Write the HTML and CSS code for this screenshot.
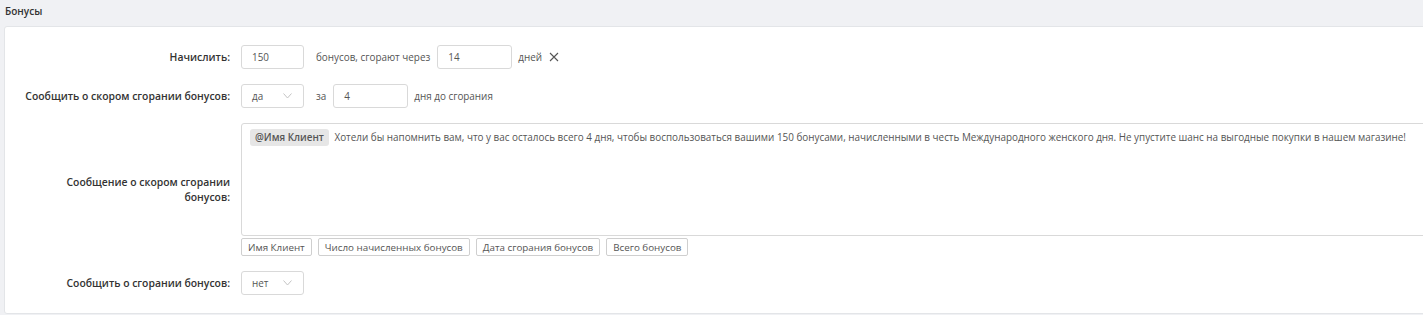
FILE: index.html
```html
<!DOCTYPE html>
<html lang="ru">
<head>
    <meta charset="UTF-8">
    <title>Бонусы</title>
    <link rel="stylesheet" href="styles.css">
</head>
<body>

<div class="section-title">Бонусы</div>

<div class="card">
    <!-- Начисление -->
    <div class="row">
        <label class="label">Начислить:</label>
        <div class="field">
            <div class="input short">150</div>
            <span class="text">бонусов, сгорают через</span>
            <div class="input">14</div>
            <span class="text">дней</span>
            <svg class="close" width="10" height="10" viewBox="0 0 10 10">
                <path d="M1 1L9 9M9 1L1 9" stroke="#555" stroke-width="1.1" fill="none"/>
            </svg>
        </div>
    </div>

    <!-- Напоминание -->
    <div class="row">
        <label class="label">Сообщить о скором сгорании бонусов:</label>
        <div class="field">
            <div class="select">
                <span>да</span>
                <svg width="9" height="6" viewBox="0 0 9 6">
                    <path d="M0.5 0.5L4.5 5L8.5 0.5" stroke="#c4c4c4" fill="none"/>
                </svg>
            </div>
            <span class="text">за</span>
            <div class="input">4</div>
            <span class="text">дня до сгорания</span>
        </div>
    </div>

    <!-- Сообщение -->
    <div class="row">
        <label class="label narrow">Сообщение о скором сгорании бонусов:</label>
        <div class="field column">
            <div class="textarea">
                <span class="chip">@Имя Клиент</span>
                Хотели бы напомнить вам, что у вас осталось всего 4 дня, чтобы воспользоваться вашими 150 бонусами, начисленными в честь Международного женского дня. Не упустите шанс на выгодные покупки в нашем магазине!
            </div>
            <div class="tags">
                <button class="tag">Имя Клиент</button>
                <button class="tag">Число начисленных бонусов</button>
                <button class="tag">Дата сгорания бонусов</button>
                <button class="tag">Всего бонусов</button>
            </div>
        </div>
    </div>

    <!-- Сгорание -->
    <div class="row">
        <label class="label">Сообщить о сгорании бонусов:</label>
        <div class="field">
            <div class="select">
                <span>нет</span>
                <svg width="9" height="6" viewBox="0 0 9 6">
                    <path d="M0.5 0.5L4.5 5L8.5 0.5" stroke="#c4c4c4" fill="none"/>
                </svg>
            </div>
        </div>
    </div>
</div>

</body>
</html>
```

FILE: styles.css
```css
* {
    margin: 0;
    padding: 0;
    box-sizing: border-box;
    font-family: "Open Sans", Arial, sans-serif;
}
body {
    background: #f0f1f4;
    overflow: hidden;
    font-size: 9.9px;
    color: #555;
}
.section-title {
    height: 26px;
    padding: 4px 5px 0;
    font-size: 10px;
    font-weight: 600;
    color: #333;
}
.card {
    margin-left: 4px;
    margin-right: -20px;
    background: #fff;
    border: 1px solid #e3e5e8;
    border-radius: 3px;
    padding: 18px 0 18px;
    display: flex;
    flex-direction: column;
    gap: 15px;
}
.row {
    display: grid;
    grid-template-columns: 225px 1fr;
    column-gap: 11px;
    align-items: center;
}
.label {
    text-align: right;
    font-size: 10.4px;
    font-weight: 600;
    color: #333;
    line-height: 15px;
}
.label.narrow {
    padding-left: 50px;
}
.field {
    display: flex;
    align-items: center;
}
.field.column {
    flex-direction: column;
    align-items: stretch;
}
.input, .select {
    height: 24px;
    width: 75px;
    border: 1px solid #d9d9d9;
    border-radius: 3px;
    padding-left: 10px;
    display: flex;
    align-items: center;
    color: #555;
}
.input.short, .select {
    width: 63px;
}
.select {
    justify-content: space-between;
    padding-right: 11px;
}
.text {
    margin: 0 7px 0 6px;
}
.short + .text, .select + .text {
    margin-left: 12px;
}
.textarea {
    height: 113px;
    border: 1px solid #d9d9d9;
    border-radius: 3px 0 0 3px;
    padding: 5px 8px;
    line-height: 17px;
    color: #555;
}
.chip {
    display: inline-block;
    background: #e6e6e6;
    border-radius: 3px;
    padding: 0 5px;
    margin-right: 3px;
    font-weight: 600;
    color: #555;
}
.tags {
    display: flex;
    gap: 6px;
    margin-top: 2px;
}
.tag {
    height: 18px;
    padding: 0 6px;
    border: 1px solid #cfcfcf;
    border-radius: 2px;
    background: #fff;
    color: #555;
    font-size: 9.8px;
}
```
